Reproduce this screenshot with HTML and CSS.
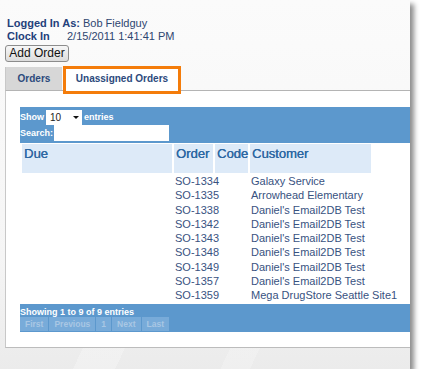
FILE: index.html
```html
<!DOCTYPE html>
<html lang="en">
<head>
  <meta charset="UTF-8" />
  <title>Unassigned Orders</title>
  <link rel="stylesheet" href="styles.css">
</head>
<body>

<div class="shot">
  <div class="info">
    <div class="info-row"><span class="info-label">Logged In As:</span> Bob Fieldguy</div>
    <div class="info-row"><span class="info-label clock">Clock In</span>2/15/2011 1:41:41 PM</div>
  </div>

  <button class="add-btn">Add Order</button>

  <div class="tabs">
    <div class="tab">Orders</div>
    <div class="tab active">Unassigned Orders</div>
  </div>

  <div class="panel">
    <div class="grid-wrap">
      <div class="grid-top">
        <div class="top-row">
          Show
          <span class="select">10<span class="arrow"></span></span>
          entries
        </div>
        <div class="top-row">
          Search:
          <span class="search"></span>
        </div>
      </div>

      <table class="grid">
        <colgroup>
          <col class="c-due">
          <col class="c-order">
          <col class="c-code">
          <col class="c-cust">
        </colgroup>
        <thead>
          <tr>
            <th>Due</th>
            <th>Order</th>
            <th>Code</th>
            <th>Customer</th>
          </tr>
        </thead>
        <tbody>
          <tr><td></td><td>SO-1334</td><td></td><td>Galaxy Service</td></tr>
          <tr><td></td><td>SO-1335</td><td></td><td>Arrowhead Elementary</td></tr>
          <tr><td></td><td>SO-1338</td><td></td><td>Daniel's Email2DB Test</td></tr>
          <tr><td></td><td>SO-1342</td><td></td><td>Daniel's Email2DB Test</td></tr>
          <tr><td></td><td>SO-1343</td><td></td><td>Daniel's Email2DB Test</td></tr>
          <tr><td></td><td>SO-1348</td><td></td><td>Daniel's Email2DB Test</td></tr>
          <tr><td></td><td>SO-1349</td><td></td><td>Daniel's Email2DB Test</td></tr>
          <tr><td></td><td>SO-1357</td><td></td><td>Daniel's Email2DB Test</td></tr>
          <tr><td></td><td>SO-1359</td><td></td><td>Mega DrugStore Seattle Site1</td></tr>
        </tbody>
      </table>

      <div class="grid-foot">
        <div class="foot-info">Showing 1 to 9 of 9 entries</div>
        <div class="pager">
          <span class="page-btn">First</span>
          <span class="page-btn">Previous</span>
          <span class="page-btn">1</span>
          <span class="page-btn">Next</span>
          <span class="page-btn">Last</span>
        </div>
      </div>
    </div>
  </div>
</div>

</body>
</html>
```

FILE: styles.css
```css
body {
  margin: 0;
  background: #fff;
  font-family: 'Liberation Sans', Arial, sans-serif;
}
.shot {
  width: 410px;
  height: 369px;
  overflow: hidden;
  background:
    linear-gradient(115deg, transparent 0 20%, rgba(255,255,255,0.25) 20% 30%, transparent 30% 55%, rgba(255,255,255,0.2) 55% 62%, transparent 62%) bottom / 100% 24px no-repeat,
    linear-gradient(#fbfbfb, #f5f5f5 70%, #ebebeb);
  box-shadow: 4px 4px 5px rgba(0,0,0,0.45);
}
.info {
  padding: 17px 0 0 7px;
  font-size: 11px;
  line-height: 13px;
  color: #2e4670;
}
.info-label {
  font-weight: bold;
  color: #23407a;
}
.clock {
  display: inline-block;
  width: 60px;
}
.add-btn {
  display: block;
  margin: 2px 0 0 5px;
  width: 64px;
  height: 17px;
  padding: 0;
  font-family: 'Liberation Sans', Arial, sans-serif;
  font-size: 12px;
  line-height: 15px;
  color: #111;
  background: linear-gradient(#f7f7f7, #dcdcdc);
  border: 1px solid #8c8c8c;
  border-radius: 3px;
}
.tabs {
  display: flex;
  margin: 5px 0 0 5px;
  width: 430px;
  height: 23px;
  border-bottom: 1px solid #b4b4b4;
  border-left: 1px solid #c8c8c8;
  font-size: 10px;
  font-weight: bold;
  color: #2c4a7c;
}
.tab {
  width: 56px;
  height: 23px;
  line-height: 24px;
  text-align: center;
  background: #d7d7d7;
}
.tab.active {
  position: relative;
  width: 118px;
  margin-left: 1px;
  height: 24px;
  background: #fff;
}
.tab.active::after {
  content: "";
  position: absolute;
  left: 0;
  right: 0;
  top: -1px;
  bottom: -3px;
  border: 3px solid #f47c0a;
}
.panel {
  margin-left: 5px;
  width: 430px;
  height: 240px;
  padding: 16px 0 0 14px;
  background: #fff;
  border-left: 1px solid #c8c8c8;
  border-bottom: 1px solid #bcbcbc;
}
.grid-top {
  height: 34px;
  padding-top: 2px;
  background: #5c98cd;
  font-size: 9px;
  font-weight: bold;
  color: #fff;
}
.top-row {
  display: flex;
  align-items: center;
  height: 16px;
}
.select {
  position: relative;
  box-sizing: border-box;
  width: 36px;
  height: 15px;
  margin: 0 2px 0 2px;
  padding-left: 4px;
  background: #fff;
  font-size: 10px;
  font-weight: normal;
  line-height: 15px;
  color: #222;
}
.arrow {
  position: absolute;
  right: 3px;
  top: 6px;
  border-left: 3px solid transparent;
  border-right: 3px solid transparent;
  border-top: 3px solid #111;
}
.search {
  width: 115px;
  height: 16px;
  margin-left: 1px;
  background: #fff;
}
.grid {
  margin-top: 1px;
  border-collapse: separate;
  border-spacing: 2px 0;
  table-layout: fixed;
  width: 353px;
}
.c-due { width: 150px; }
.c-order { width: 39px; }
.c-code { width: 33px; }
.c-cust { width: 121px; }
.grid th {
  height: 29px;
  padding: 2px 0 0 2px;
  box-sizing: border-box;
  vertical-align: top;
  text-align: left;
  background: #ddeaf8;
  font-size: 13px;
  font-weight: normal;
  line-height: 16px;
  color: #2d67a2;
  text-shadow: 0.3px 0 0 #2d67a2;
}
.grid td {
  padding: 0 0 0 1px;
  font-size: 11px;
  line-height: 14.25px;
  color: #38527f;
  white-space: nowrap;
}
.grid tbody tr:first-child td {
  padding-top: 1px;
}
.grid tbody tr:last-child td {
  padding-bottom: 2px;
}
.grid-foot {
  height: 28px;
  background: #5c98cd;
  font-size: 9px;
  font-weight: bold;
}
.foot-info {
  height: 13px;
  line-height: 16px;
  color: #fff;
}
.pager {
  display: flex;
  gap: 1px;
}
.page-btn {
  height: 14px;
  padding: 0 5px;
  line-height: 14px;
  background: #78abd9;
  color: #a9c7e4;
  font-size: 8.5px;
}
```
